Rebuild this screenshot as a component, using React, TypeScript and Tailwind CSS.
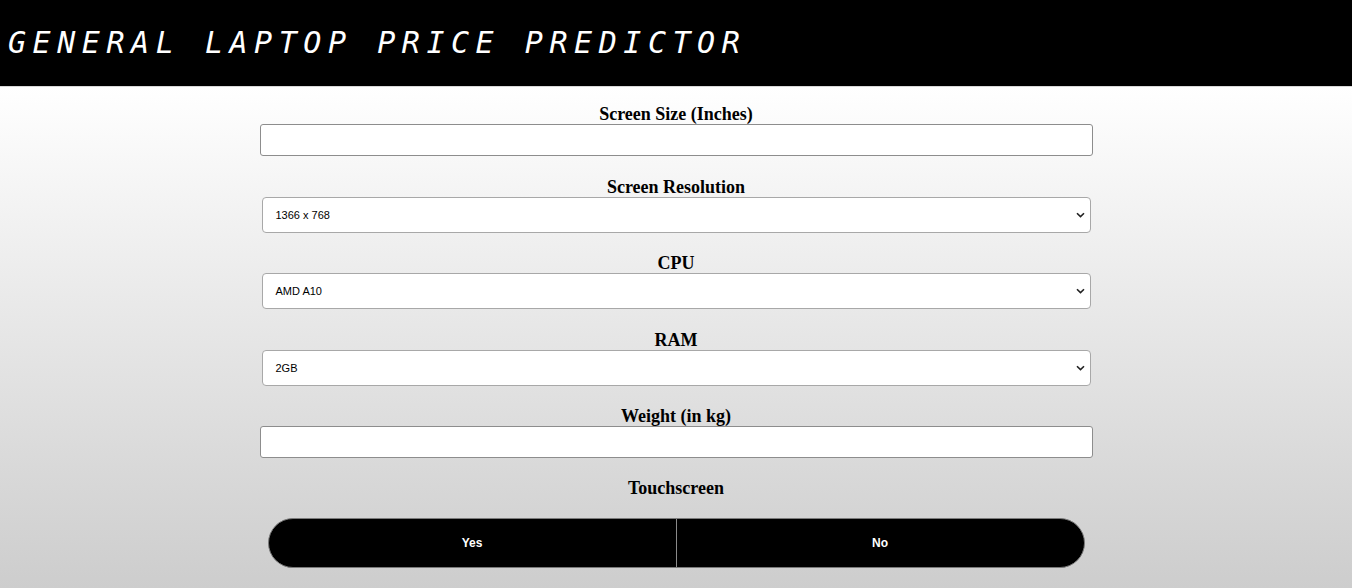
import React from "react";

function Chevron() {
  return (
    <svg width="9" height="6" viewBox="0 0 9 6" className="absolute right-[5px] top-1/2 -translate-y-1/2">
      <path d="M1 1.2 L4.5 4.6 L8 1.2" fill="none" stroke="#222" strokeWidth="1.6" />
    </svg>
  );
}

function Label({ children }: { children: React.ReactNode }) {
  return (
    <div className="h-[20px] leading-[20px] text-center text-[18px] font-bold text-black" style={{ fontFamily: '"Liberation Serif", serif' }}>
      {children}
    </div>
  );
}

function TextInput() {
  return <div className="h-[32px] w-full bg-white border border-[#8d8d8d] rounded-[3px]" />;
}

function Select({ value }: { value: string }) {
  return (
    <div className="relative mx-[2px] h-[36px] bg-white border border-[#a8a8a8] rounded-[4px] flex items-center pl-[13px] text-[11px] text-black" style={{ fontFamily: '"Liberation Sans", Arial, sans-serif' }}>
      {value}
      <Chevron />
    </div>
  );
}

export default function App() {
  return (
    <div className="w-[1352px] h-[588px] overflow-hidden flex flex-col">
      <div className="h-[86px] bg-black flex items-center pl-[8px] shrink-0">
        <h1
          className="text-white text-[30px] italic tracking-[6.55px] leading-none mt-[-1px]"
          style={{ fontFamily: '"DejaVu Sans Mono", monospace' }}
        >
          GENERAL LAPTOP PRICE PREDICTOR
        </h1>
      </div>
      <div className="flex-1 bg-gradient-to-b from-[#ffffff] to-[#cdcdcd] border-t border-[#d8d8d8]">
        <div className="w-[833px] mx-auto pt-[17px] flex flex-col">
          <Label>Screen Size (Inches)</Label>
          <TextInput />
          <div className="h-[21px]" />
          <Label>Screen Resolution</Label>
          <Select value="1366 x 768" />
          <div className="h-[20px]" />
          <Label>CPU</Label>
          <Select value="AMD A10" />
          <div className="h-[21px]" />
          <Label>RAM</Label>
          <Select value="2GB" />
          <div className="h-[20px]" />
          <Label>Weight (in kg)</Label>
          <TextInput />
          <div className="h-[20px]" />
          <Label>Touchscreen</Label>
          <div className="h-[20px]" />
          <div className="mx-[8px] h-[50px] flex rounded-full overflow-hidden border border-[#7a7a7a] bg-black" style={{ fontFamily: '"Liberation Sans", Arial, sans-serif' }}>
            <div className="flex-1 flex items-center justify-center text-white text-[12px] font-bold border-r border-[#8a8a8a]">Yes</div>
            <div className="flex-1 flex items-center justify-center text-white text-[12px] font-bold">No</div>
          </div>
        </div>
      </div>
    </div>
  );
}
